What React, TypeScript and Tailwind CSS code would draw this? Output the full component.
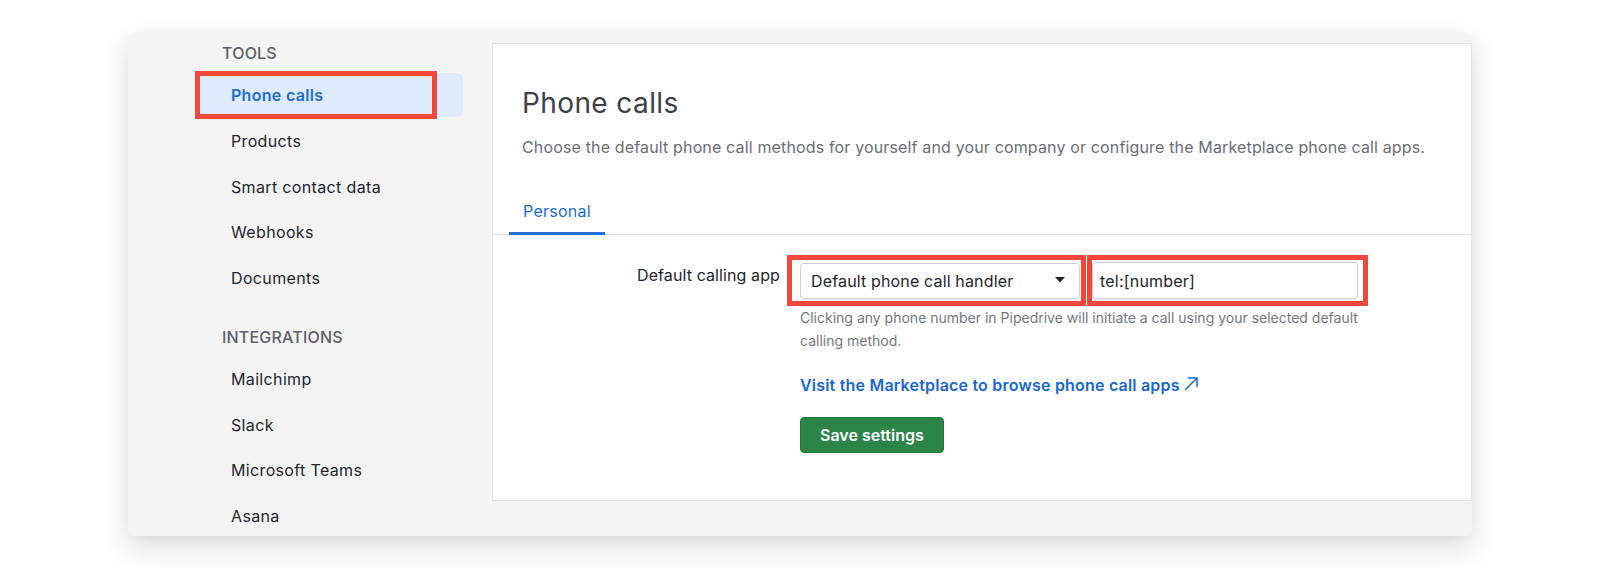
import React from "react";

const font = { fontFamily: "Inter, 'Noto Sans', 'Liberation Sans', sans-serif" };

function NavItem({ label, active }: { label: string; active?: boolean }) {
  if (active) {
    return (
      <div className="relative h-[45.5px] flex items-center">
        <div className="absolute left-0 right-0 top-0 h-[44px] rounded-md bg-[#deebfc]" />
        <div className="absolute left-[-2px] top-[-2px] w-[242px] h-[48px] border-[5px] border-[#f4473b]" />
        <span className="relative pl-[34px] text-[16px] font-semibold tracking-[0.3px] text-[#1f6cd6] -mt-[2px]">{label}</span>
      </div>
    );
  }
  return (
    <div className="h-[45.5px] flex items-center">
      <span className="pl-[34px] text-[16px] tracking-[0.35px] text-[#23252d]">{label}</span>
    </div>
  );
}

function SectionHeader({ label }: { label: string }) {
  return (
    <div className="h-[40px] flex items-center pl-[25px] text-[16px] font-medium text-[#5d6069] tracking-[0.2px]">
      {label}
    </div>
  );
}

export default function App() {
  return (
    <div className="w-full h-[568px] bg-white pt-[33px] pl-[128px]" style={font}>
      <div className="w-[1344px] h-[503px] flex overflow-hidden rounded-[4px] bg-[#f4f4f4] shadow-[0_12px_28px_rgba(0,0,0,0.14),0_0_10px_rgba(0,0,0,0.04)]">
        {/* Sidebar */}
        <div className="w-[364px] shrink-0 pl-[69px] pr-[29px]">
          <SectionHeader label="TOOLS" />
          <NavItem label="Phone calls" active />
          <NavItem label="Products" />
          <NavItem label="Smart contact data" />
          <NavItem label="Webhooks" />
          <NavItem label="Documents" />
          <div className="h-[16px]" />
          <SectionHeader label="INTEGRATIONS" />
          <NavItem label="Mailchimp" />
          <NavItem label="Slack" />
          <NavItem label="Microsoft Teams" />
          <NavItem label="Asana" />
        </div>

        {/* Content */}
        <div className="flex-1 pt-[10px]">
          <div className="h-[458px] bg-white border border-[#e4e4e4]">
            <div className="pl-[29px] pt-[41px]">
              <h1 className="text-[28px] leading-[36px] font-normal tracking-[0.4px] text-[#3c404a]">Phone calls</h1>
              <p className="mt-[14px] text-[16px] leading-6 tracking-[0.15px] text-[#6b6e75]">
                Choose the default phone call methods for yourself and your company or configure the Marketplace phone call apps.
              </p>
            </div>
            <div className="mt-[40px] border-b border-[#e4e4e4] flex">
              <div className="ml-[16px] px-[14px] pb-[9px] border-b-[3px] border-[#2271e0] -mb-px text-[16px] leading-6 tracking-[0.25px] text-[#1d6bd6]">
                Personal
              </div>
            </div>

            <div className="mt-[28px] pl-[29px] flex">
              <div className="w-[258px] text-right text-[16px] leading-6 tracking-[0.1px] text-[#23252b]">Default calling app</div>
              <div className="ml-[20px] w-[558px]">
                <div className="flex gap-[12px]">
                  <div className="relative w-[280px]">
                    <div className="absolute left-[-13px] top-[-8px] w-[299px] h-[51px] border-[5px] border-[#f4473b] pointer-events-none" />
                    <div className="relative h-[36px] rounded-[4px] border border-[#cdd0d4] bg-white flex items-center pl-[10px] pr-[14px] shadow-[0_1px_1px_rgba(0,0,0,0.06)]">
                      <span className="flex-1 text-[16px] tracking-[0.15px] text-[#23252b]">Default phone call handler</span>
                      <svg width="10" height="6" viewBox="0 0 10 6" className="mt-[-2px]">
                        <path d="M0 0 L10 0 L5 5.5 Z" fill="#23252b" />
                      </svg>
                    </div>
                  </div>
                  <div className="relative w-[266px]">
                    <div className="absolute left-[-5px] top-[-8px] w-[281px] h-[51px] border-[5px] border-[#f4473b] pointer-events-none" />
                    <div className="relative h-[37px] -mt-px rounded-[4px] border border-[#cdd0d4] bg-white flex items-center pl-[7px] shadow-[0_1px_1px_rgba(0,0,0,0.06)]">
                      <span className="text-[16px] tracking-[0.2px] text-[#23252b]">tel:[number]</span>
                    </div>
                  </div>
                </div>
                <p className="mt-[7px] text-[14px] leading-[23px] text-[#75787e]">
                  Clicking any phone number in Pipedrive will initiate a call using your selected default calling method.
                </p>
                <div className="mt-[21px] flex items-center text-[16px] leading-6 font-semibold tracking-[0.2px] text-[#1867d0]">
                  <span>Visit the Marketplace to browse phone call apps</span>
                  <svg width="16" height="16" viewBox="0 0 16 16" className="ml-[3px] mt-[-2px]" fill="none" stroke="#1867d0" strokeWidth="1.5">
                    <path d="M2 14 L14 2" />
                    <path d="M5 2 H14 V11" />
                  </svg>
                </div>
                <button className="mt-[20px] h-[36px] px-[19px] rounded-[4px] bg-[#2a8546] border border-[#237a3d] text-white text-[16px] font-semibold">
                  Save settings
                </button>
              </div>
            </div>
          </div>
        </div>
      </div>
    </div>
  );
}
